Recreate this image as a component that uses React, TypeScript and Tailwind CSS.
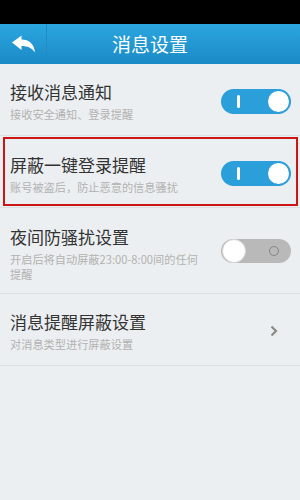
import React from 'react';

function ToggleOn() {
  return (
    <div className="relative h-[25px] w-[70px] shrink-0 rounded-full bg-[#2a9fd9]">
      <div className="absolute left-[16px] top-[6px] h-[13px] w-[3px] rounded-sm bg-white" />
      <div className="absolute right-[2px] top-[2px] h-[21px] w-[21px] rounded-full bg-white" />
    </div>
  );
}

function ToggleOff() {
  return (
    <div className="relative h-[24px] w-[70px] shrink-0 rounded-full bg-[#b9b9b9]">
      <div className="absolute left-[1px] top-[0px] h-[24px] w-[24px] rounded-full border border-[#d6d6d6] bg-white" />
      <div className="absolute right-[12px] top-[7px] h-[10px] w-[10px] rounded-full border-[1.5px] border-[#858585]" />
    </div>
  );
}

function Row({
  title,
  sub,
  right,
  className = '',
}: {
  title: string;
  sub: string;
  right: React.ReactNode;
  className?: string;
}) {
  return (
    <div
      className={`relative flex items-start justify-between border-b border-[#dde0e3] pl-[10px] pr-[9px] ${className}`}
    >
      <div className="flex w-[193px] flex-col">
        <div className="whitespace-nowrap text-[17px] leading-[22px] text-[#333333]">{title}</div>
        <div className="mt-[4px] text-[11.2px] leading-[15px] text-[#b2b2b2]">{sub}</div>
      </div>
      {right}
    </div>
  );
}

export default function App() {
  return (
    <div
      className="flex h-[500px] w-[300px] flex-col bg-[#eceff1]"
      style={{ fontFamily: '"Noto Sans CJK SC", "Noto Sans", sans-serif' }}
    >
      {/* status bar */}
      <div className="h-[24px] bg-black" />

      {/* header */}
      <div className="relative flex h-[40px] items-center bg-gradient-to-b from-[#2ba6de] to-[#1b8ac7]">
        <div className="flex h-full w-[47px] items-center justify-center border-r border-[#1f8cc6]">
          <svg width="25" height="19" viewBox="0 0 25 19">
            <path
              d="M1 7.5 L10.5 0.5 L10.5 4.5 C18 4.5 23 8.5 24 17.5 C21 13 16.5 11 10.5 11 L10.5 15 Z"
              fill="white"
            />
          </svg>
        </div>
        <div className="absolute inset-0 flex items-center justify-center pointer-events-none">
          <span className="text-[19px] text-white">消息设置</span>
        </div>
      </div>

      <Row
        className="h-[72px] pt-[17px]"
        title="接收消息通知"
        sub="接收安全通知、登录提醒"
        right={
          <div className="mt-[8px]">
            <ToggleOn />
          </div>
        }
      />

      <Row
        className="h-[72px] pt-[18px]"
        title="屏蔽一键登录提醒"
        sub="账号被盗后，防止恶意的信息骚扰"
        right={
          <div className="mt-[7px]">
            <ToggleOn />
          </div>
        }
      />

      <Row
        className="h-[86px] pt-[18px]"
        title="夜间防骚扰设置"
        sub="开启后将自动屏蔽23:00-8:00间的任何提醒"
        right={
          <div className="mt-[13px]">
            <ToggleOff />
          </div>
        }
      />

      <Row
        className="h-[72px] pt-[17px]"
        title="消息提醒屏蔽设置"
        sub="对消息类型进行屏蔽设置"
        right={
          <div className="mr-[13px] mt-[14px]">
            <svg width="8" height="12" viewBox="0 0 8 12">
              <path d="M1.5 1.5 L6 6 L1.5 10.5" fill="none" stroke="#8a8a8a" strokeWidth="2.2" />
            </svg>
          </div>
        }
      />

      {/* highlight box around second row */}
      <div className="pointer-events-none absolute left-[3px] top-[137px] h-[69px] w-[295px] border-2 border-[#cc1515]" />
    </div>
  );
}
